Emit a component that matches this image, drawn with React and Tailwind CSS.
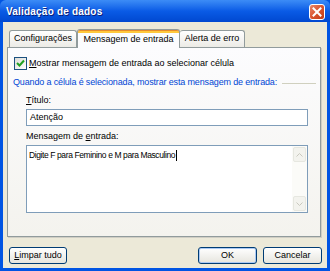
export default function App() {
  const ui = { fontFamily: '"Liberation Sans", Arial, sans-serif' };
  return (
    <div className="w-[330px] h-[271px] flex flex-col bg-[#0054e3] overflow-hidden select-none" style={ui}>
      {/* title bar */}
      <div className="h-[22px] shrink-0 flex items-center justify-between pl-[6px] pr-[5px] rounded-t-[6px] bg-gradient-to-b from-[#3c8cf6] via-[#0a5be6] to-[#0148d0]">
        <span className="text-white font-bold text-[10px] tracking-[0.2px] [text-shadow:1px_1px_0_#0a1e7a]">
          Validação de dados
        </span>
        <div className="w-[16px] h-[16px] mt-[1px] rounded-[3px] border border-white bg-gradient-to-br from-[#e8866a] via-[#d9542e] to-[#c13a15] flex items-center justify-center">
          <svg width="10" height="10" viewBox="0 0 10 10">
            <path d="M1.5 1.5 L8.5 8.5 M8.5 1.5 L1.5 8.5" stroke="white" strokeWidth="2" strokeLinecap="square" />
          </svg>
        </div>
      </div>

      {/* body */}
      <div className="flex-1 mx-[3px] mb-[3px] bg-[#ece9d8] flex flex-col pt-[7px] pl-[4px] pr-[6px]">
        {/* tabs */}
        <div className="h-[18px] flex items-end pl-[2px] text-[9px] text-black relative z-10 whitespace-nowrap">
          <div className="w-[68px] h-[17px] border border-b-0 border-[#919b9c] rounded-t-[3px] bg-gradient-to-b from-white to-[#ecebe6] flex items-center justify-center">
            Configurações
          </div>
          <div className="w-[103px] h-[19px] -mb-px border border-b-0 border-[#919b9c] rounded-t-[3px] bg-[#fcfcfe] flex flex-col">
            <div className="h-[3px] bg-[#ffc83c] rounded-t-[2px] border-t border-[#e68b2c]" />
            <div className="flex-1 flex items-center justify-center pb-[2px]">Mensagem de entrada</div>
          </div>
          <div className="w-[65px] h-[17px] border border-b-0 border-l-0 border-[#919b9c] rounded-t-[3px] bg-gradient-to-b from-white to-[#ecebe6] flex items-center justify-center">
            Alerta de erro
          </div>
        </div>

        {/* panel */}
        <div className="h-[190px] border border-[#919b9c] bg-gradient-to-b from-[#fcfcfe] to-[#f4f3ee] flex flex-col text-[9px] text-black shadow-[1px_1px_0_#d0cec4] whitespace-nowrap">
          <div className="flex items-center pl-[6px] mt-[9px] h-[13px]">
            <div className="w-[13px] h-[13px] border border-[#1c5180] bg-gradient-to-br from-[#dcdcd7] to-white flex items-center justify-center">
              <svg width="9" height="9" viewBox="0 0 9 9">
                <path d="M1 4 L3.5 6.5 L8 1.5" stroke="#21a121" strokeWidth="2" fill="none" />
              </svg>
            </div>
            <span className="ml-[2px]"><span className="underline">M</span>ostrar mensagem de entrada ao selecionar célula</span>
          </div>

          <div className="flex items-center pl-[5px] pr-[4px] mt-[6px] h-[14px]">
            <span className="text-[#0046d5] tracking-[-0.15px]">Quando a célula é selecionada, mostrar esta mensagem de entrada:</span>
            <div className="flex-1 ml-[5px] h-px bg-[#d0d0bf]" />
          </div>

          <div className="pl-[18px] pr-[12px]">
            <div className="mt-[4px] h-[13px] leading-[13px]"><span className="underline">T</span>ítulo:</div>
            <div className="mt-[2px] h-[17px] border border-[#7f9db9] bg-white flex items-center pl-[3px]">Atenção</div>

            <div className="mt-[4px] h-[13px] leading-[13px]">Mensagem de <span className="underline">e</span>ntrada:</div>
            <div className="mt-[2px] h-[68px] border border-[#7f9db9] bg-white flex">
              <div className="flex-1 pl-[2px] pt-[3px] leading-[13px] text-[8.5px] tracking-[-0.4px]">
                Digite F para Feminino e M para Masculino<span className="inline-block w-px h-[11px] ml-px bg-black align-middle" />
              </div>
              <div className="w-[15px] bg-[#fbfbf8] flex flex-col justify-between p-px">
                <div className="h-[15px] rounded-[2px] border border-[#e6e7e0] bg-[#f3f3ee] flex items-center justify-center">
                  <svg width="7" height="4" viewBox="0 0 7 4"><path d="M0.5 3.5 L3.5 0.5 L6.5 3.5" stroke="#c9c8be" fill="none" /></svg>
                </div>
                <div className="h-[15px] rounded-[2px] border border-[#e6e7e0] bg-[#f3f3ee] flex items-center justify-center">
                  <svg width="7" height="4" viewBox="0 0 7 4"><path d="M0.5 0.5 L3.5 3.5 L6.5 0.5" stroke="#c9c8be" fill="none" /></svg>
                </div>
              </div>
            </div>
          </div>
        </div>

        {/* buttons */}
        <div className="mt-[10px] flex items-center text-[9px] text-black whitespace-nowrap">
          <button className="ml-[2px] w-[58px] h-[17px] rounded-[3px] border border-[#003c74] bg-gradient-to-b from-white to-[#e6e5de] flex items-center justify-center">
            <span><span className="underline">L</span>impar tudo</span>
          </button>
          <div className="flex-1" />
          <button className="w-[59px] h-[17px] rounded-[3px] border border-[#003c74] bg-gradient-to-b from-white to-[#e6e5de] shadow-[inset_0_0_0_1px_#aac9f4] flex items-center justify-center">
            OK
          </button>
          <button className="ml-[6px] mr-[-1px] w-[59px] h-[17px] rounded-[3px] border border-[#003c74] bg-gradient-to-b from-white to-[#e6e5de] flex items-center justify-center">
            Cancelar
          </button>
        </div>
      </div>
    </div>
  );
}
